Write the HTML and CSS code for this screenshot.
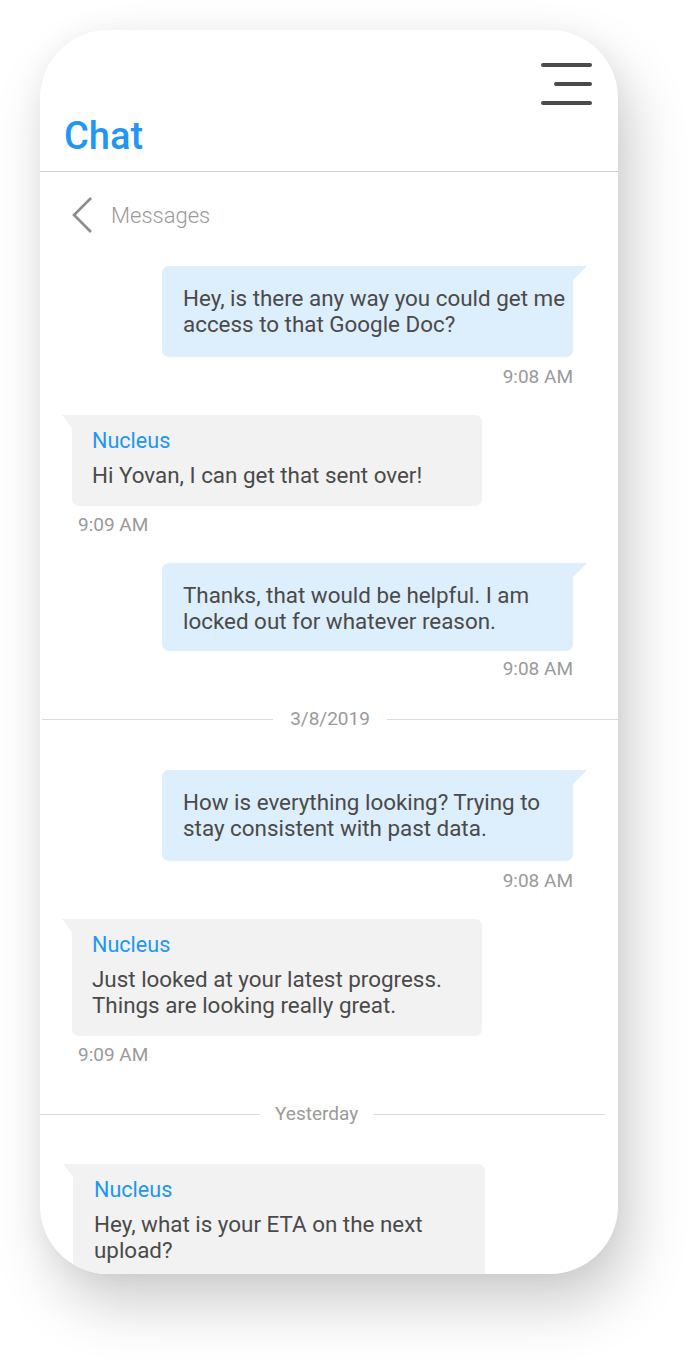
FILE: index.html
```html
<!DOCTYPE html>
<html lang="en">
<head>
<meta charset="utf-8">
<title>Chat</title>
<link rel="stylesheet" href="styles.css">
</head>
<body>
<div class="phone">
  <header class="header">
    <div class="menu" aria-label="Menu">
      <span class="bar"></span>
      <span class="bar short"></span>
      <span class="bar"></span>
    </div>
    <h1 class="title">Chat</h1>
  </header>
  <main class="chat">
    <div class="back">
      <svg class="chev" width="24" height="38" viewBox="0 0 24 38"><path d="M21 2 L4 19 L21 36" fill="none" stroke="#8c8c8c" stroke-width="2.6"/></svg>
      <span class="back-label">Messages</span>
    </div>

    <div class="group sent first">
      <div class="bubble">Hey, is there any way you could get me access to that Google Doc?</div>
      <div class="time">9:08 AM</div>
    </div>

    <div class="group recv">
      <div class="bubble"><div class="name">Nucleus</div><div class="text">Hi Yovan, I can get that sent over!</div></div>
      <div class="time">9:09 AM</div>
    </div>

    <div class="group sent compact">
      <div class="bubble">Thanks, that would be helpful. I am locked out for whatever reason.</div>
      <div class="time">9:08 AM</div>
    </div>

    <div class="divider d1"><span class="line"></span><span class="label">3/8/2019</span><span class="line"></span></div>

    <div class="group sent after-div">
      <div class="bubble">How is everything looking? Trying to stay consistent with past data.</div>
      <div class="time">9:08 AM</div>
    </div>

    <div class="group recv">
      <div class="bubble"><div class="name">Nucleus</div><div class="text">Just looked at your latest progress. Things are looking really great.</div></div>
      <div class="time">9:09 AM</div>
    </div>

    <div class="divider d2"><span class="line"></span><span class="label">Yesterday</span><span class="line"></span></div>

    <div class="group recv last">
      <div class="bubble"><div class="name">Nucleus</div><div class="text">Hey, what is your ETA on the next upload?</div></div>
    </div>
  </main>
</div>
</body>
</html>
```
FILE: styles.css
```css
* { box-sizing: border-box; }
html, body { margin: 0; padding: 0; background: #fff; }
body {
  font-family: Roboto, "Liberation Sans", Arial, sans-serif;
  width: 698px;
  height: 1364px;
  overflow: hidden;
}
.phone {
  margin: 30px 0 0 40px;
  width: 578px;
  height: 1244px;
  background: #fff;
  border-radius: 68px;
  overflow: hidden;
  box-shadow: 12px 30px 60px rgba(0, 0, 0, 0.2), 0 0 30px rgba(0, 0, 0, 0.04);
  display: flex;
  flex-direction: column;
}
.header {
  display: flex;
  flex-direction: column;
  padding: 33px 26px 12px 24px;
  border-bottom: 1px solid #cfcfcf;
}
.menu {
  align-self: flex-end;
  width: 51px;
  display: flex;
  flex-direction: column;
  align-items: flex-end;
  gap: 15px;
}
.bar {
  display: block;
  width: 51px;
  height: 4px;
  border-radius: 2px;
  background: #4a4a4a;
}
.bar.short { width: 38px; }
.title {
  margin: 9px 0 0 0;
  font-size: 38px;
  line-height: 45px;
  font-weight: 500;
  color: #2196f3;
}
.chat {
  display: flex;
  flex-direction: column;
  padding: 0 45px 0 32px;
}
.back {
  margin-top: 24px;
  height: 38px;
  display: flex;
  align-items: center;
}
.chev { display: block; margin-left: -2px; }
.back-label {
  margin-left: 17px;
  font-size: 22px;
  font-weight: 300;
  color: #9a9a9a;
}
.group { display: flex; flex-direction: column; margin-top: 28px; }
.group.sent { align-items: flex-end; }
.group.recv { align-items: flex-start; }
.group.first { margin-top: 32px; }
.group.after-div { margin-top: 41px; }
.group.last { margin-top: 40px; }
.bubble {
  position: relative;
  font-size: 22.4px;
  line-height: 26px;
  color: #4a4a4a;
  border-radius: 7px;
}
.sent .bubble {
  width: 411px;
  padding: 19px 7px 20px 21px;
  background: #ddeefc;
  border-top-right-radius: 0;
}
.sent.compact .bubble { padding-bottom: 17px; }
.sent.compact .time { margin-top: 8px; }
.sent .bubble::before {
  content: "";
  position: absolute;
  top: 0;
  right: -14px;
  border-top: 14px solid #ddeefc;
  border-right: 14px solid transparent;
}
.recv .bubble {
  width: 410px;
  padding: 13px 8px 18px 20px;
  background: #f2f2f2;
  border-top-left-radius: 0;
}
.recv .bubble::before {
  content: "";
  position: absolute;
  top: 0;
  left: -10px;
  border-top: 13px solid #f2f2f2;
  border-left: 10px solid transparent;
}
.name { color: #2196f3; font-size: 21.6px; }
.text { margin-top: 8px; }
.time {
  margin-top: 10px;
  font-size: 19px;
  line-height: 20px;
  color: #9a9a9a;
}
.recv .time { margin-top: 9px; margin-left: 6px; }
.divider {
  display: flex;
  align-items: center;
  height: 20px;
  gap: 17px;
}
.divider .line { flex: 1; height: 1px; background: #dcdcdc; }
.divider .label { font-size: 19px; line-height: 20px; color: #9a9a9a; }
.divider.d1 { margin: 30px -45px 0 -30px; }
.divider.d2 { margin: 39px -32px 0 -32px; gap: 15px; }
.divider.d2 .line:first-child { flex: 0 0 220px; }
.last .bubble { margin-left: 1px; width: 412px; padding-left: 21px; }
```
